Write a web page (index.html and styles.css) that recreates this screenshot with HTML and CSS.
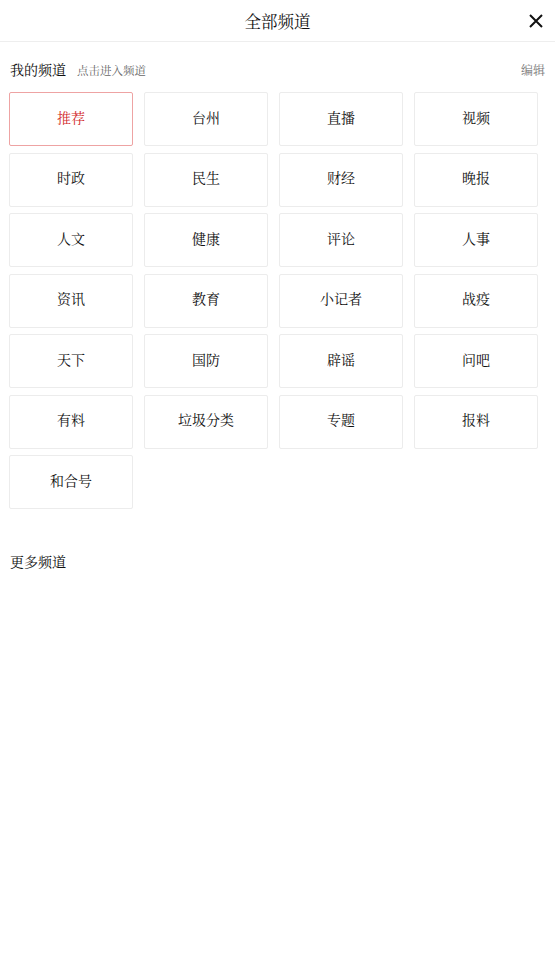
FILE: index.html
```html
<!DOCTYPE html>
<html lang="zh-CN">
<head>
<meta charset="utf-8">
<title>全部频道</title>
<link rel="stylesheet" href="styles.css">
</head>
<body>
<header class="topbar">
  <div class="topbar-side"></div>
  <h1 class="topbar-title">全部频道</h1>
  <div class="topbar-side topbar-right">
    <button class="close-btn" aria-label="关闭">
      <svg width="14" height="14" viewBox="0 0 14 14"><path d="M1 1 L13 13 M13 1 L1 13" stroke="#111" stroke-width="2" fill="none"/></svg>
    </button>
  </div>
</header>

<section class="section">
  <div class="section-head">
    <span class="section-title">我的频道</span>
    <span class="section-hint">点击进入频道</span>
    <span class="section-edit">编辑</span>
  </div>
  <div class="channel-grid">
    <div class="tile tile-active">推荐</div>
    <div class="tile">台州</div>
    <div class="tile">直播</div>
    <div class="tile">视频</div>
    <div class="tile">时政</div>
    <div class="tile">民生</div>
    <div class="tile">财经</div>
    <div class="tile">晚报</div>
    <div class="tile">人文</div>
    <div class="tile">健康</div>
    <div class="tile">评论</div>
    <div class="tile">人事</div>
    <div class="tile">资讯</div>
    <div class="tile">教育</div>
    <div class="tile">小记者</div>
    <div class="tile">战疫</div>
    <div class="tile">天下</div>
    <div class="tile">国防</div>
    <div class="tile">辟谣</div>
    <div class="tile">问吧</div>
    <div class="tile">有料</div>
    <div class="tile">垃圾分类</div>
    <div class="tile">专题</div>
    <div class="tile">报料</div>
    <div class="tile">和合号</div>
  </div>
</section>

<section class="section more">
  <div class="section-head">
    <span class="section-title">更多频道</span>
  </div>
</section>
</body>
</html>
```

FILE: styles.css
```css
* { box-sizing: border-box; }

html, body {
  margin: 0;
  padding: 0;
  background: #fff;
}

body {
  font-family: "Noto Serif CJK SC", "AR PL UMing CN", "Noto Sans CJK SC", serif;
  color: #111;
}

.topbar {
  display: grid;
  grid-template-columns: 1fr auto 1fr;
  align-items: center;
  height: 42px;
  border-bottom: 1px solid #eeeeee;
}

.topbar-title {
  margin: 0;
  font-size: 16.5px;
  font-weight: normal;
  line-height: 40px;
  color: #111;
}

.topbar-right {
  display: flex;
  justify-content: flex-end;
  padding-right: 12px;
}

.close-btn {
  border: 0;
  background: none;
  padding: 0;
  width: 14px;
  height: 14px;
  display: flex;
}

.section-head {
  display: flex;
  align-items: baseline;
  height: 20px;
  line-height: 20px;
  padding: 0 10px;
}

.section {
  padding-top: 17px;
}

.section-title {
  font-size: 14px;
  color: #111;
}

.section-hint {
  font-size: 11.5px;
  color: #666;
  margin-left: 11px;
}

.section-edit {
  margin-left: auto;
  font-size: 12px;
  color: #777;
}

.channel-grid {
  display: grid;
  grid-template-columns: repeat(4, 124px);
  column-gap: 11px;
  row-gap: 6.5px;
  padding-left: 9px;
  margin-top: 13px;
}

.tile {
  height: 54px;
  border: 1px solid #ececec;
  border-radius: 2px;
  display: flex;
  align-items: center;
  justify-content: center;
  font-size: 14px;
  line-height: 1;
  padding-bottom: 5px;
  color: #111;
}

.tile-active {
  border-color: #eea3a3;
  color: #d22a2a;
}

.more {
  padding-top: 42px;
}
```
